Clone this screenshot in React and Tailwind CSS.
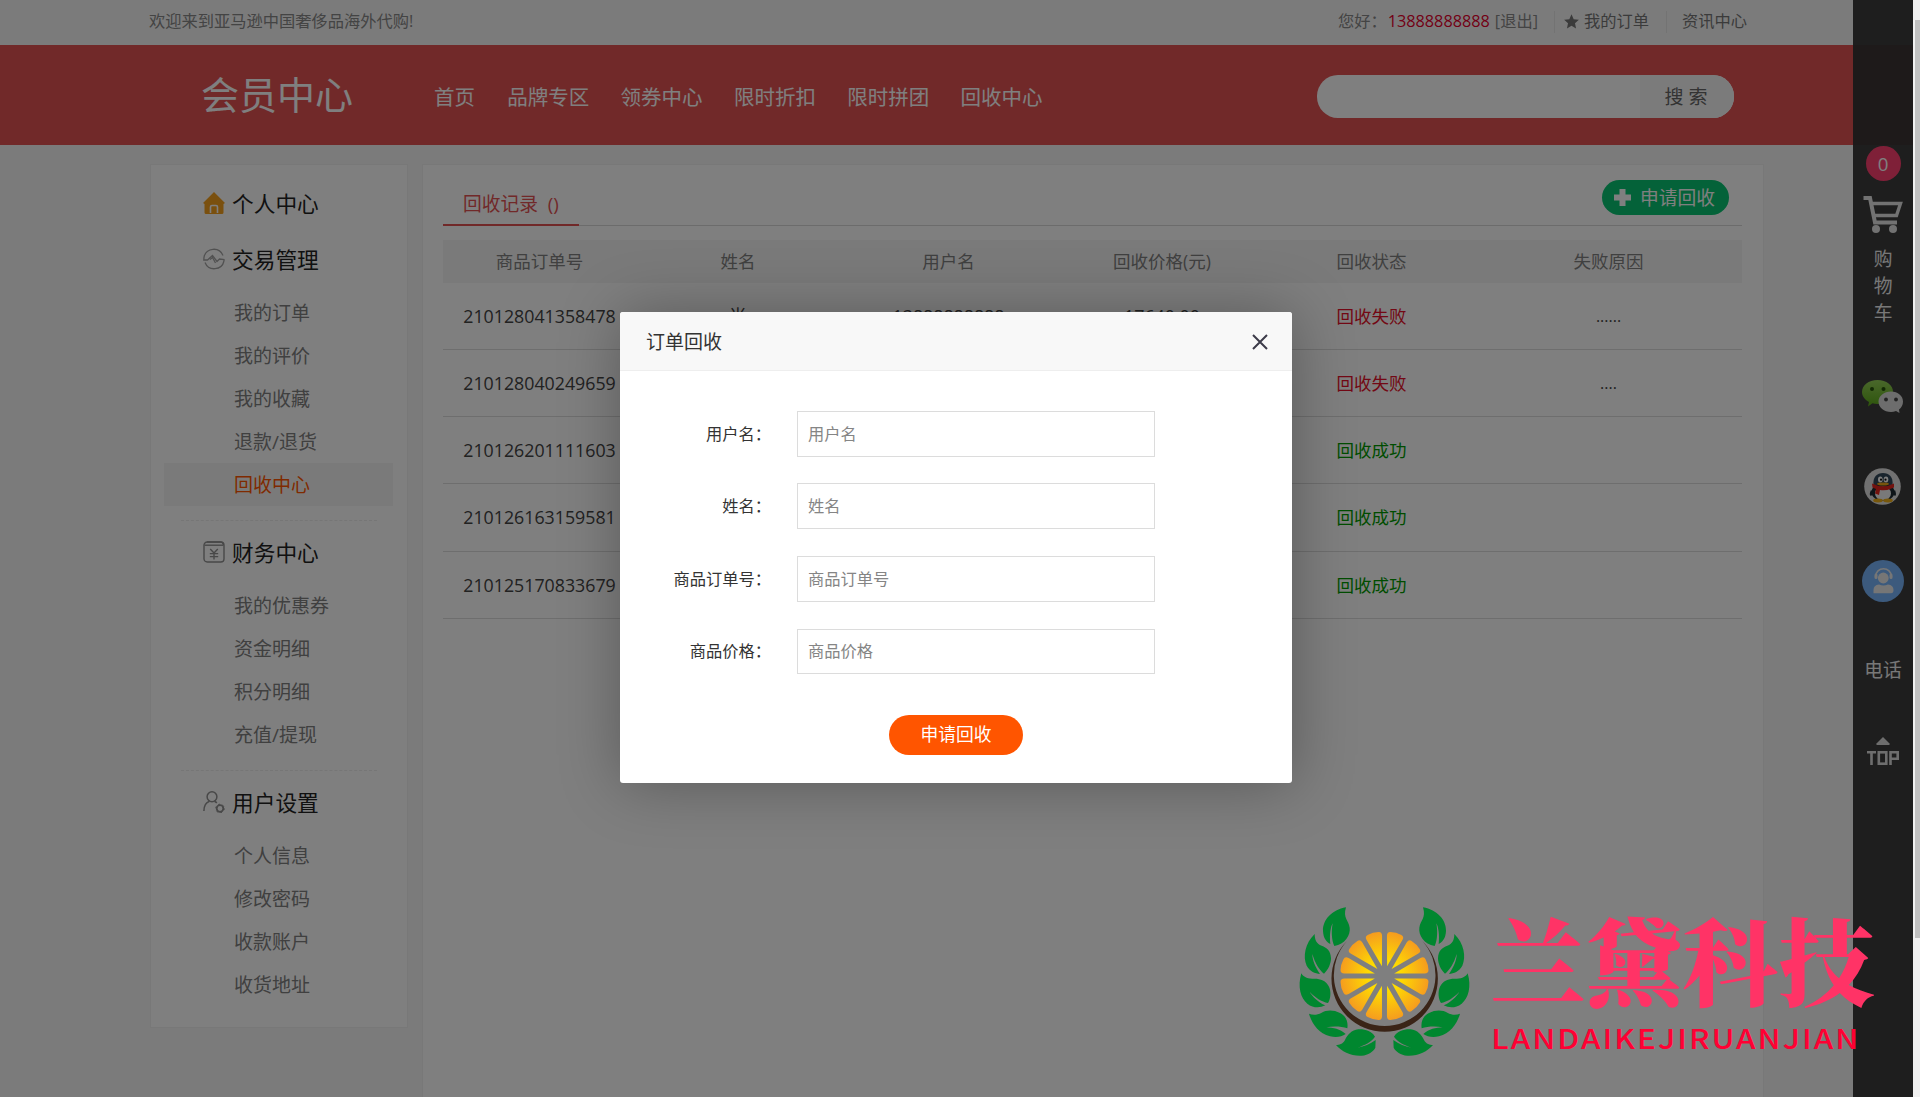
const NAV = ['首页', '品牌专区', '领券中心', '限时折扣', '限时拼团', '回收中心'];

const COLS = 'grid grid-cols-[193px_204px_217px_210px_209px_265px] text-center';

const ROWS = [
  { h: 'h-[67px]', no: '210128041358478', name: '尚', user: '13888888888', price: '17640.00', ok: false, why: '......' },
  { h: 'h-[67px]', no: '210128040249659', name: '', user: '', price: '', ok: false, why: '....' },
  { h: 'h-[67px]', no: '210126201111603', name: '', user: '', price: '', ok: true, why: '' },
  { h: 'h-[68px]', no: '210126163159581', name: '', user: '', price: '', ok: true, why: '' },
  { h: 'h-[67px]', no: '210125170833679', name: '', user: '', price: '', ok: true, why: '' },
];

const FIELDS = [
  { label: '用户名', mt: 'mt-[40px]', h: 'h-[46px]' },
  { label: '姓名', mt: 'mt-[26px]', h: 'h-[46px]' },
  { label: '商品订单号', mt: 'mt-[27px]', h: 'h-[46px]' },
  { label: '商品价格', mt: 'mt-[27px]', h: 'h-[45px]' },
];

function HomeIcon() {
  return (
    <svg width="22" height="22" viewBox="0 0 22 22">
      <path d="M11 0 L22 11 L20.5 12 V20.5 Q20.5 22 19 22 H3 Q1.5 22 1.5 20.5 V12 L0 11 Z" fill="#f5a11f" />
      <path d="M7.5 21 V15 Q7.5 13.5 9 13.5 H13 Q14.5 13.5 14.5 15 V21" fill="none" stroke="#fff" strokeWidth="1.6" />
    </svg>
  );
}

function TradeIcon() {
  return (
    <svg width="22" height="22" viewBox="0 0 22 22" fill="none" stroke="#a3a3a3" strokeWidth="1.3">
      <path d="M1 9 A10 10 0 0 1 20 7.5 M21 13 A10 10 0 0 1 2 14.5" />
      <path d="M1 9 L0.8 12 H4.500 L9.5 7.5 L14 13.5 L16.500 11 L21 11.500 V13" />
      <path d="M7 11.5 L9.5 9.5 L12.5 15" />
    </svg>
  );
}

function MoneyIcon() {
  return (
    <svg width="22" height="22" viewBox="0 0 22 22" fill="none" stroke="#909090" strokeWidth="1.4">
      <path d="M4 1 H17.5 Q20 1 20.5 4" />
      <rect x="1" y="1" width="20" height="20" rx="3.2" />
      <path d="M1.5 4.2 H20.5" />
      <path d="M7.2 8 L11 12 L14.8 8 M11 12 V18.5 M6.8 12.6 H15.2 M6.8 15.6 H15.2" />
    </svg>
  );
}

function UserIcon() {
  return (
    <svg width="22" height="22" viewBox="0 0 22 22" fill="none" stroke="#909090" strokeWidth="1.5">
      <ellipse cx="9" cy="5.8" rx="4.9" ry="5" />
      <path d="M0.9 20 C1 14.5 3 11.5 6.5 10.3 M11.5 10.3 Q13 11 13.8 12" />
      <circle cx="17" cy="17.5" r="3.3" strokeWidth="1.8" />
      <circle cx="17" cy="17.5" r="4.3" strokeWidth="1" strokeDasharray="1.7 2.8" />
    </svg>
  );
}

const GROUPS = [
  { title: '个人中心', Icon: HomeIcon, items: [], box: 'h-[44px] mt-[17px]', list: 'hidden', rule: '' },
  { title: '交易管理', Icon: TradeIcon, items: ['我的订单', '我的评价', '我的收藏', '退款/退货', '回收中心'], box: 'h-[44px] mt-[12px]', list: 'mt-[9px]', rule: 'mt-[14px]' },
  { title: '财务中心', Icon: MoneyIcon, items: ['我的优惠券', '资金明细', '积分明细', '充值/提现'], box: 'h-[44px] mt-[10px]', list: 'mt-[9px]', rule: 'mt-[14px]' },
  { title: '用户设置', Icon: UserIcon, items: ['个人信息', '修改密码', '收款账户', '收货地址'], box: 'h-[44px] mt-[10px]', list: 'mt-[9px]', rule: '' },
];

function SideMenu() {
  return (
    <aside className="h-[864px] w-[258px] overflow-hidden border border-[#f1f1f1] bg-white">
      {GROUPS.map(({ title, Icon, items, box, list, rule }) => (
        <div key={title}>
          <div className={`flex items-center pl-[52px] text-[21.7px] text-[#222] ${box}`}>
            <span className="-mt-[2px]"><Icon /></span>
            <span className="ml-[7px]">{title}</span>
          </div>
          <ul className={`ml-[13px] mr-[14px] ${list}`}>
            {items.map((t) => (
              <li
                key={t}
                className={`h-[43px] pl-[70px] text-[19px] leading-[45px] ${t === '回收中心' ? 'bg-[#f5f5f5] text-[#ff5500]' : 'text-[#808080]'}`}
              >
                {t}
              </li>
            ))}
          </ul>
          {rule && <div className={`ml-[30px] w-[196px] border-t border-dashed border-[#ececec] ${rule}`} />}
        </div>
      ))}
    </aside>
  );
}

function RightBar() {
  return (
    <div className="absolute left-[1853px] top-0 flex h-[1097px] w-[60px] flex-col items-center bg-[#333]/95 text-[18.75px] text-[#f0f0f0]">
      <div className="mt-[146px] h-[35px] w-[35px] rounded-full bg-[#ff4070] text-center leading-[35px] text-white">0</div>
      <svg className="mt-[14px]" width="40" height="39" viewBox="0 0 40 39" fill="none" stroke="#e4e4e4">
        <path d="M0.5 3 H7 L12 27.5 H34" strokeWidth="4" />
        <path d="M8 8.5 H37.5 L33.5 20.5 H11" strokeWidth="3.4" />
        <circle cx="13" cy="34" r="4" fill="#e4e4e4" stroke="none" />
        <circle cx="30" cy="34" r="4" fill="#e4e4e4" stroke="none" />
      </svg>
      <div className="mt-[11px] flex flex-col leading-[27px]">
        <span>购</span>
        <span>物</span>
        <span>车</span>
      </div>
      <svg className="mt-[54px]" width="42" height="34" viewBox="0 0 42 34">
        <defs>
          <linearGradient id="wx" x1="0" y1="0" x2="0" y2="1">
            <stop offset="0" stopColor="#94d057" />
            <stop offset="1" stopColor="#5cab18" />
          </linearGradient>
        </defs>
        <path d="M15.500 0 C24.500 0 31 5.300 31 12 C31 19 24.500 24 15.500 24 Q12.500 24 10.500 23.300 L6 26.500 L7 22 C2.500 19.600 0 16 0 12 C0 5.300 6.500 0 15.500 0 Z" fill="url(#wx)" />
        <circle cx="10" cy="9" r="2" fill="#27540a" />
        <circle cx="21.500" cy="9" r="2" fill="#27540a" />
        <path d="M29 11.500 C36 11.500 41 16 41 21.500 C41 25 39.500 27.500 37 29.500 L37.500 33 L34 31 Q31.500 32 29 32 C22 32 16.500 27.500 16.500 21.500 C16.500 16 22 11.500 29 11.500 Z" fill="#dadada" />
        <circle cx="24" cy="19.500" r="1.900" fill="#444" />
        <circle cx="34" cy="19.500" r="1.900" fill="#444" />
      </svg>
      <svg className="-ml-[2px] mt-[54px]" width="37" height="37" viewBox="0 0 37 37">
        <circle cx="18.500" cy="18.500" r="18.300" fill="#e2e2e2" />
        <ellipse cx="19" cy="24" rx="11.500" ry="9" fill="#1d2a33" />
        <path d="M7 22 Q4.500 27 7 28 L10 25 Z M31 22 Q33 27 31 28 L28 25 Z" fill="#1d2a33" />
        <ellipse cx="19" cy="25.500" rx="8" ry="7" fill="#f2f2f2" />
        <path d="M9.500 17 C8.500 9 13 5 19 5 C25 5 29.500 9 28.500 17 Z" fill="#33495a" />
        <ellipse cx="16.300" cy="11.500" rx="2.300" ry="3" fill="#fff" />
        <ellipse cx="22" cy="11.500" rx="2.300" ry="3" fill="#fff" />
        <circle cx="17" cy="11.700" r="1.100" fill="#111" />
        <circle cx="21.500" cy="11.700" r="1.100" fill="#111" />
        <ellipse cx="19" cy="16" rx="6" ry="1.600" fill="#f0a818" />
        <path d="M8 15.500 Q19 21 30 15.500 L30 19.500 Q23 23 16 22 L15 27 L11 25.500 L12 21 L8.500 19.500 Z" fill="#e6241c" />
        <ellipse cx="14" cy="32.500" rx="4.800" ry="1.900" fill="#f0b018" />
        <ellipse cx="24" cy="32.500" rx="4.800" ry="1.900" fill="#f0b018" />
      </svg>
      <svg className="mt-[55px]" width="42" height="42" viewBox="0 0 42 42">
        <circle cx="21" cy="21" r="21" fill="#78b4fa" />
        <path d="M13.500 17 C13.500 6 29.500 6 29.500 17" fill="none" stroke="#ececec" strokeWidth="1.600" />
        <rect x="12.500" y="13.500" width="3" height="5.500" rx="1.500" fill="#ececec" />
        <rect x="27.500" y="13.500" width="3" height="5.500" rx="1.500" fill="#ececec" />
        <circle cx="21.300" cy="18" r="5.400" fill="#ececec" />
        <path d="M11.500 33.300 V30 Q11.500 25 17 24.500 Q21.500 26.500 26 24.500 Q31.500 25 31.500 30 Q31.500 33.300 29 33.300 Z" fill="#ececec" />
      </svg>
      <div className="mt-[54px] leading-[27px]">电话</div>
      <svg className="mt-[54px]" width="32" height="28" viewBox="0 0 32 28" fill="none" stroke="#dcdcdc" strokeWidth="2.600">
        <path d="M16 0 L22.500 6.500 V8 H9.500 V6.500 Z" fill="#dcdcdc" stroke="none" />
        <path d="M0 15.300 H9 M4.500 15.300 V28" />
        <rect x="11.800" y="15.300" width="7.500" height="11.400" />
        <path d="M23.500 28 V15.300 H30.700 V21.800 H23.500" />
      </svg>
    </div>
  );
}

function Modal() {
  return (
    <div className="relative h-[471px] w-[672px] rounded-[3px] bg-white text-[#333] shadow-[1px_1px_62px_rgba(0,0,0,0.3)]">
      <div className="flex h-[59px] items-center justify-between rounded-t-[3px] border-b border-[#eee] bg-[#f8f8f8] pl-[26px] pr-[24px]">
        <span className="mt-[2px] text-[19px]">订单回收</span>
        <svg className="mt-[2px]" width="16" height="16" viewBox="0 0 16 16" stroke="#3c3b49" strokeWidth="2">
          <path d="M1 1 L15 15 M15 1 L1 15" />
        </svg>
      </div>
      {FIELDS.map((f) => (
        <div key={f.label} className={`flex items-center text-[16.25px] ${f.mt} ${f.h}`}>
          <span className="w-[151px] whitespace-nowrap text-right">{f.label}：</span>
          <div className="ml-[26px] flex h-full w-[358px] items-center border border-[#dcdcdc] bg-white pl-[10px] text-[#858585]">{f.label}</div>
        </div>
      ))}
      <button className="ml-[269px] mt-[41px] block h-[40px] w-[134px] rounded-full bg-[#ff5500] pb-[2px] text-[17.8px] leading-[36px] text-white">申请回收</button>
    </div>
  );
}

const LEAVES = [
  'M168 37 C125 45 98 75 99 108 C100 130 110 142 121 147 C118 120 122 95 128 85 C124 105 124 135 133 153 C165 148 182 120 179 98 C176 75 158 70 168 37 Z',
  'M74 117 C45 145 38 185 50 212 C60 230 75 235 90 237 C75 215 67 195 67 177 C75 205 88 225 102 236 C115 225 123 205 123 190 C122 165 110 158 95 152 C80 147 74 135 74 117 Z',
  'M34 235 C22 275 32 310 52 326 C70 340 90 339 106 331 C85 322 67 305 59 290 C75 308 95 320 114 324 C122 312 124 290 117 275 C108 255 88 250 70 251 C50 252 40 245 34 235 Z',
  'M57 356 C65 385 85 415 120 424 C140 429 155 425 167 417 C150 402 130 398 109 397 C130 393 155 394 172 400 C175 380 168 363 150 354 C130 343 108 345 95 353 C80 361 68 360 57 356 Z',
  'M138 450 C155 470 185 484 215 482 C235 480 250 470 256 458 L257 435 C240 447 222 455 203 458 C225 450 245 440 255 425 C245 408 225 402 205 403 C185 405 172 420 165 435 C158 448 148 450 138 450 Z',
];

function Brand() {
  return (
    <div className="absolute left-[1290px] top-[895px] flex">
      <svg width="200" height="170" viewBox="0 0 600 510">
        <defs>
          <radialGradient id="fruit" gradientUnits="userSpaceOnUse" cx="0" cy="0" r="136">
            <stop offset="0.35" stopColor="#ffdc00" />
            <stop offset="1" stopColor="#f59a20" />
          </radialGradient>
        </defs>
        <g fill="#00872f">
          {LEAVES.map((d) => <path key={d} d={d} />)}
          <g transform="translate(567 0) scale(-1 1)">
            {LEAVES.map((d) => <path key={d} d={d} />)}
          </g>
        </g>
        <path d="M171 138 A159.600 159.600 0 1 0 397 138 A152.500 152.500 0 1 1 171 138 Z" fill="#3a2417" />
        <g transform="translate(283.500 243)" fill="url(#fruit)">
          {Array.from({ length: 12 }, (_, i) => (
            <path key={i} transform={`rotate(${15 + i * 30})`} d="M0 -30 L-24 -118 Q-27 -130 -17 -132 Q0 -136 17 -132 Q27 -130 24 -118 Z" />
          ))}
        </g>
      </svg>
      <div className="flex flex-col whitespace-nowrap">
        <div className="mt-[11px] h-[104px] font-['Noto_Serif_CJK_SC','Noto_Sans_CJK_SC',serif] text-[95.7px] font-black leading-[104px] tracking-[0.5px] text-[#ff3366]">兰黛科技</div>
        <div className="mt-[7px] origin-left scale-x-[1.14] pl-px font-['Noto_Sans_CJK_SC',sans-serif] text-[27.5px] font-medium leading-[40px] tracking-[1.8px] text-[#ff0033]">LANDAIKEJIRUANJIAN</div>
      </div>
    </div>
  );
}

export default function App() {
  return (
    <div className="relative h-[1097px] w-[1920px] overflow-hidden bg-[#f7f7f7] font-['Open_Sans','Noto_Sans_CJK_SC',sans-serif]">
      <div className="flex h-[45px] items-center justify-between pb-[2px] pl-[149px] pr-[173px] text-[16.25px] text-[#888]">
        <span>欢迎来到亚马逊中国奢侈品海外代购!</span>
        <div className="flex items-center whitespace-nowrap">
          <span>您好：</span>
          <span className="ml-[1px] text-[#e6002d]">13888888888</span>
          <span className="ml-[5px]">[退出]</span>
          <span className="ml-[16px] h-[22px] w-px bg-[#e6e6e6]" />
          <svg className="ml-[9px]" width="15" height="15" viewBox="0 0 24 24" fill="#777">
            <path d="M12 0.500 L15.500 8.200 L23.800 9.100 L17.600 14.800 L19.300 23 L12 18.800 L4.700 23 L6.400 14.800 L0.200 9.100 L8.500 8.200 Z" />
          </svg>
          <span className="ml-[5px] text-[#777]">我的订单</span>
          <span className="ml-[17px] h-[22px] w-px bg-[#e6e6e6]" />
          <span className="ml-[15px] text-[#777]">资讯中心</span>
        </div>
      </div>

      <header className="flex h-[100px] items-center bg-[#e35253] text-white">
        <h1 className="ml-[201px] w-[233px] pb-[2px] text-[38px] leading-[96px]">会员中心</h1>
        <nav className="flex w-[883px] gap-[31.3px] pt-[5px] text-[20.5px]">
          {NAV.map((n) => <span key={n} className="first:mr-px">{n}</span>)}
        </nav>
        <div className="mt-[2px] flex h-[43px] w-[417px] justify-end overflow-hidden rounded-[21px] bg-white">
          <div className="w-[94px] whitespace-pre bg-[#f7f7f7] pr-[2px] text-center text-[19px] leading-[44px] text-[#666]">搜 索</div>
        </div>
      </header>

      <div className="ml-[150px] mt-[19px] flex items-start">
        <SideMenu />
        <main className="ml-[14px] h-[1000px] w-[1342px] border border-[#f1f1f1] bg-white pl-[20px] pr-[21px]">
          <div className="flex h-[61px] items-end justify-between border-b border-[#d8d8d8]">
            <div className="-mb-px h-[44px] w-[136px] border-b-2 border-[#e35253] pl-[20px] text-[18.75px] leading-[44px] text-[#e35253]">回收记录&nbsp; ()</div>
            <button className="mb-[10px] mr-[13px] flex h-[35px] w-[127px] items-center rounded-full bg-[#08c472] pl-[12px] text-[18.75px] text-white">
              <svg width="17" height="17" viewBox="0 0 17 17"><path d="M5.500 0 H11.500 V5.500 H17 V11.500 H11.500 V17 H5.500 V11.500 H0 V5.500 H5.500 Z" fill="#fff" /></svg>
              <span className="ml-[9px] mt-[2px]">申请回收</span>
            </button>
          </div>
          <div className={`${COLS} mt-[14px] h-[43px] bg-[#f5f5f5] text-[17.5px] leading-[43px] text-[#808080]`}>
            <span>商品订单号</span>
            <span>姓名</span>
            <span>用户名</span>
            <span>回收价格(元)</span>
            <span>回收状态</span>
            <span>失败原因</span>
          </div>
          {ROWS.map((r) => (
            <div key={r.no} className={`${COLS} ${r.h} border-b border-[#dcdcdc] text-[17.8px] leading-[66px] text-[#444]`}>
              <span>{r.no}</span>
              <span>{r.name}</span>
              <span>{r.user}</span>
              <span>{r.price}</span>
              <span className={r.ok ? 'text-[17.5px] text-[#009a00]' : 'text-[17.5px] text-[#e6102a]'}>{r.ok ? '回收成功' : '回收失败'}</span>
              <span className="text-[16px]">{r.why}</span>
            </div>
          ))}
        </main>
      </div>

      <RightBar />

      <div className="absolute left-0 top-0 h-[1097px] w-[1913px] bg-black/50 pl-[620px] pt-[312px]">
        <Modal />
      </div>

      <div className="absolute left-[1913px] top-0 flex h-[1097px] w-[7px] justify-end bg-[#f1f1f1]">
        <div className="mt-[20px] h-[918px] w-[5px] bg-[#c1c1c1]" />
      </div>

      <Brand />
    </div>
  );
}
